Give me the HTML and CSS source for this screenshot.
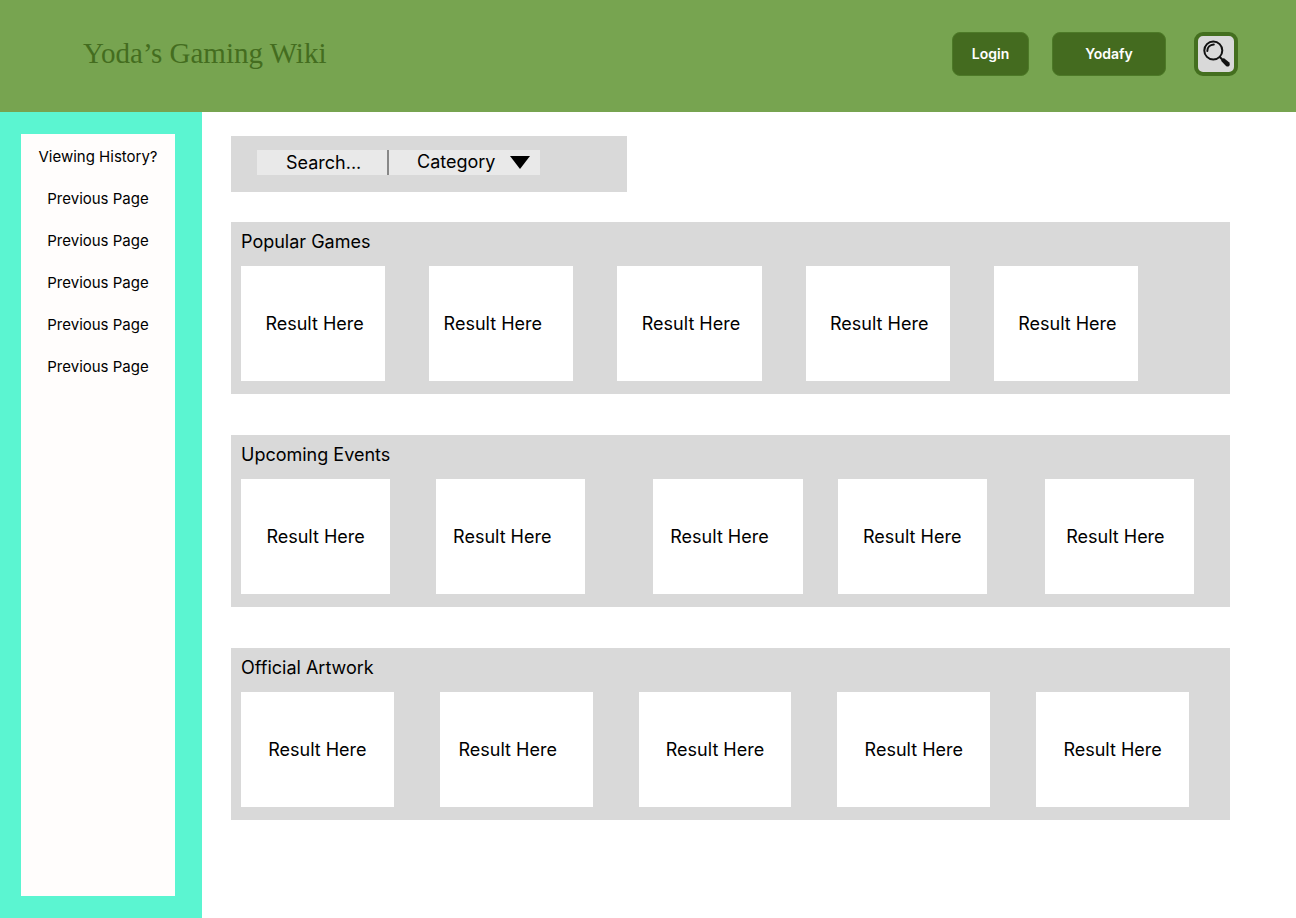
FILE: index.html
```html
<!DOCTYPE html>
<html lang="en">
<head>
<meta charset="utf-8">
<meta name="viewport" content="width=device-width, initial-scale=1">
<title>Yoda’s Gaming Wiki</title>
<link rel="stylesheet" href="styles.css">
</head>
<body>
<header class="header">
  <h1 class="brand">Yoda’s Gaming Wiki</h1>
  <nav class="actions">
    <button class="btn btn-login" type="button">Login</button>
    <button class="btn btn-yodafy" type="button">Yodafy</button>
    <button class="btn-search" type="button" aria-label="Search">
      <svg viewBox="0 0 28 28" width="28" height="28" aria-hidden="true">
        <circle cx="11.300" cy="10.500" r="9" fill="none" stroke="#111" stroke-width="2"/>
        <path d="M5.300 11C5.300 7.500 8 4.800 11.800 4.500" fill="none" stroke="#111" stroke-width="2" stroke-linecap="round"/>
        <path d="M17.800 17l3 3" stroke="#111" stroke-width="2"/>
        <path d="M19 20.800L21.800 18L27 22.300Q28.400 24 27.300 25.700Q25.800 27.300 24 26Z" fill="#111"/>
      </svg>
    </button>
  </nav>
</header>
<div class="layout">
  <aside class="sidebar">
    <div class="history">
      <h2 class="history-item">Viewing History?</h2>
      <a class="history-item" href="#">Previous Page</a>
      <a class="history-item" href="#">Previous Page</a>
      <a class="history-item" href="#">Previous Page</a>
      <a class="history-item" href="#">Previous Page</a>
      <a class="history-item" href="#">Previous Page</a>
    </div>
  </aside>
  <main class="main">
    <form class="search">
      <input class="search-input" type="text" placeholder="Search..." aria-label="Search">
      <div class="category">
        <select class="category-select" aria-label="Category"><option>Category</option></select>
        <svg class="category-arrow" viewBox="0 0 20 13" width="20" height="13" aria-hidden="true"><path d="M0 0h20L10 13z"/></svg>
      </div>
    </form>
    <section class="panel">
      <h2 class="panel-title">Popular Games</h2>
      <div class="cards cards-popular">
        <article class="card">Result Here</article>
        <article class="card card-lean">Result Here</article>
        <article class="card">Result Here</article>
        <article class="card">Result Here</article>
        <article class="card">Result Here</article>
      </div>
    </section>
    <section class="panel">
      <h2 class="panel-title">Upcoming Events</h2>
      <div class="cards cards-events">
        <article class="card">Result Here</article>
        <article class="card card-lean">Result Here</article>
        <article class="card card-lean">Result Here</article>
        <article class="card">Result Here</article>
        <article class="card card-tilt">Result Here</article>
      </div>
    </section>
    <section class="panel">
      <h2 class="panel-title">Official Artwork</h2>
      <div class="cards cards-artwork">
        <article class="card">Result Here</article>
        <article class="card card-lean">Result Here</article>
        <article class="card">Result Here</article>
        <article class="card">Result Here</article>
        <article class="card">Result Here</article>
      </div>
    </section>
  </main>
</div>
</body>
</html>
```

FILE: styles.css
```css
* {
  box-sizing: border-box;
}

body {
  margin: 0;
  min-height: 100vh;
  display: flex;
  flex-direction: column;
  background: #fff;
  color: #000;
  font-family: Inter, "Liberation Sans", sans-serif;
  font-size: 18px;
  line-height: 24px;
}

h1,
h2 {
  margin: 0;
  font-weight: 400;
}

button,
input,
select {
  font: inherit;
  color: inherit;
}

.header {
  display: flex;
  justify-content: space-between;
  align-items: flex-start;
  padding: 32px 58px 36px 83px;
  background: #77a450;
}

.brand {
  color: #446d1f;
  font-family: "Liberation Serif", serif;
  font-size: 29px;
  line-height: 42px;
}

.actions {
  display: flex;
  align-items: center;
}

.btn {
  height: 44px;
  padding: 0;
  border: 1px solid #4d7a27;
  border-radius: 8px;
  background: #446b1f;
  color: #fff;
  font-size: 14px;
  font-weight: 600;
}

.btn-login {
  width: 77px;
  margin-right: 23px;
}

.btn-yodafy {
  width: 114px;
  margin-right: 28px;
}

.btn-search {
  display: flex;
  align-items: center;
  justify-content: center;
  width: 44px;
  height: 44px;
  padding: 0;
  border: 4px solid #446f1f;
  border-radius: 9px;
  background: #d9d9d9;
}

.layout {
  flex: 1;
  display: flex;
}

.sidebar {
  flex: 0 0 202px;
  display: flex;
  padding: 22px 27px 22px 21px;
  background: #5bf5d1;
}

.history {
  flex: 1;
  display: flex;
  flex-direction: column;
  align-items: center;
  gap: 18px;
  padding-top: 11px;
  background: #fffdfc;
}

.history-item {
  color: #000;
  font-size: 15px;
  line-height: 24px;
  text-decoration: none;
}

.main {
  flex: 1;
  min-width: 0;
  padding: 24px 66px 24px 29px;
}

.search {
  display: flex;
  width: 396px;
  max-width: 100%;
  margin-bottom: 30px;
  padding: 14px 26px 17px;
  background: #d9d9d9;
}

.search-input {
  width: 132px;
  height: 25px;
  padding: 0 0 0 29px;
  border: 0;
  border-right: 2px solid #888;
  border-radius: 0;
  background: #e9e9e9;
}

.search-input::placeholder {
  color: #000;
  opacity: 1;
}

.category {
  position: relative;
  width: 151px;
}

.category-select {
  display: block;
  width: 100%;
  height: 25px;
  padding: 0 0 2px 28px;
  border: 0;
  border-radius: 0;
  appearance: none;
  background: #e9e9e9;
}

.category-arrow {
  position: absolute;
  top: 6px;
  right: 10px;
  pointer-events: none;
}

.panel {
  margin-bottom: 41px;
  padding: 8px 10px 13px;
  background: #d9d9d9;
}

.panel-title {
  margin-bottom: 12px;
  font-size: 18px;
  line-height: 24px;
}

.cards {
  display: grid;
}

.card {
  display: flex;
  align-items: center;
  justify-content: center;
  height: 115px;
  background: #fff;
  white-space: nowrap;
}

.card-lean {
  padding-right: 17px;
}

.card-tilt {
  padding-right: 8px;
}

.cards-popular {
  grid-template-columns: repeat(5, 1fr);
  gap: 44px;
  padding-right: 82px;
}

.cards-popular .card:not(.card-lean) {
  padding-left: 3px;
}

.cards-events {
  grid-template-columns: 149fr 46fr 149fr 68fr 149fr 35fr 149fr 58fr 149fr;
  padding-right: 26px;
}

.cards-events .card:nth-child(2) {
  grid-column: 3;
}

.cards-events .card:nth-child(3) {
  grid-column: 5;
}

.cards-events .card:nth-child(4) {
  grid-column: 7;
}

.cards-events .card:nth-child(5) {
  grid-column: 9;
}

.cards-artwork {
  grid-template-columns: repeat(5, 1fr);
  gap: 46px;
  padding-right: 31px;
}
```
